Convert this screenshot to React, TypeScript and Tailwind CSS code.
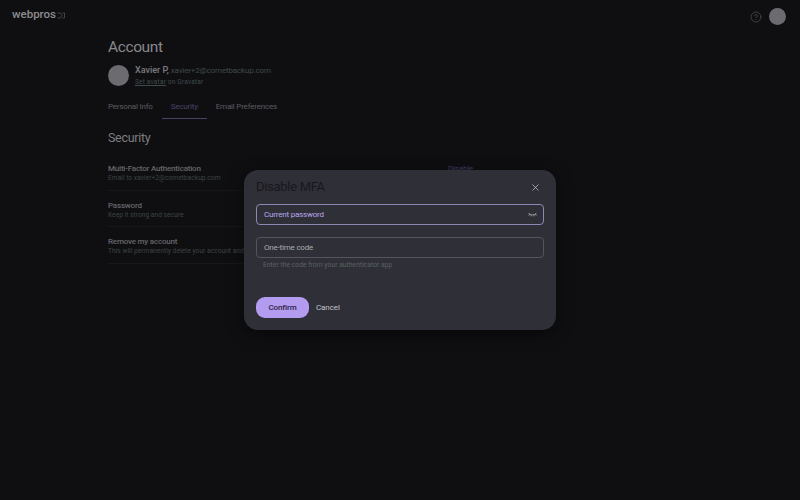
import React from 'react';
import { X, CircleHelp } from 'lucide-react';

const tabs = ['Personal Info', 'Security', 'Email Preferences'];

const rows = [
  { title: 'Multi-Factor Authentication', sub: 'Email to xavier+2@cometbackup.com', action: 'Disable' },
  { title: 'Password', sub: 'Keep it strong and secure', action: '' },
  { title: 'Remove my account', sub: 'This will permanently delete your account and', action: '' },
];

const App = () => {
  return (
    <div className="relative h-[500px] w-[800px] overflow-hidden bg-[#0f0f12] font-['Roboto',sans-serif]">
      {/* Top bar */}
      <header className="flex h-[33px] items-center justify-between pl-3 pr-[14px]">
        <div className="flex items-center pb-[3px]">
          <span className="text-[11.5px] font-medium leading-none text-[#8c8c8e]">webpros</span>
          <svg width="8" height="7" viewBox="0 0 8 7" className="ml-[0.5px] text-[#4a4a4e]" fill="none" stroke="currentColor" strokeWidth="0.9">
            <path d="M0.5 1h3l1.5 2.5-1.5 2.5h-3M7.5 1h-2M7.5 6h-2M7.5 1v5" />
          </svg>
        </div>
        <div className="flex items-center gap-[7px]">
          <CircleHelp size={12} strokeWidth={1.3} className="text-[#56565a]" />
          <div className="h-[17px] w-[17px] rounded-full bg-[#6b6b70]" />
        </div>
      </header>

      <main className="ml-[108px] w-[365px]">
        <h1 className="mt-[3px] text-[15.5px] leading-[22px] tracking-[-0.4px] text-[#88888b]">Account</h1>

        <div className="mt-[6px] flex items-center gap-[6px]">
          <div className="h-[21px] w-[21px] rounded-full bg-[#6b6b70]" />
          <div>
            <div className="flex items-baseline gap-[2px] leading-[13px]">
              <span className="text-[9px] font-medium text-[#7c7c80]">Xavier P,</span>
              <span className="text-[8px] tracking-[-0.15px] text-[#3f4a4a]">xavier+2@cometbackup.com</span>
            </div>
            <div className="mt-[1px] text-[6.5px] leading-[9px] tracking-[0.2px] text-[#3f4a4a]">
              <span className="underline">Set avatar</span> on Gravatar
            </div>
          </div>
        </div>

        <nav className="mt-[8px] flex text-[8px] tracking-[-0.2px]">
          {tabs.map((t) => (
            <div
              key={t}
              className={
                t === 'Security'
                  ? 'mx-[9px] border-b-[1.5px] border-[#4a4367] px-[9px] pb-[5px] pt-[6px] leading-[12px] text-[#4a4367]'
                  : 'pb-[5px] pt-[6px] leading-[12px] text-[#5c5c60]'
              }
            >
              {t}
            </div>
          ))}
        </nav>

        <h2 className="mt-[9px] text-[12.5px] leading-[20px] tracking-[-0.3px] text-[#7d7d80]">Security</h2>

        <div className="mt-[6px]">
          {rows.map((r) => (
            <div key={r.title} className="flex h-[36.6px] items-start justify-between border-b border-[#17171b] pt-[9px]">
              <div>
                <div className="text-[8px] font-medium leading-[11px] tracking-[-0.2px] text-[#66666a]">{r.title}</div>
                <div className="whitespace-nowrap text-[6.7px] leading-[9px] text-[#3c4343]">{r.sub}</div>
              </div>
              {r.action && <div className="text-[8px] leading-[11px] tracking-[-0.2px] text-[#453f68]">{r.action}</div>}
            </div>
          ))}
        </div>
      </main>

      {/* Dialog */}
      <div className="absolute left-[244px] top-[170px] flex h-[160px] w-[312px] flex-col rounded-[14px] bg-[#2f2f38] px-[12px] shadow-[0_4px_16px_rgba(0,0,0,0.5)]">
        <div className="flex h-[34px] items-center justify-between">
          <h3 className="mb-[2px] text-[13px] leading-none tracking-[-0.3px] text-[#17171c]">Disable MFA</h3>
          <X size={11} strokeWidth={1.5} className="mr-[3px] mt-[1px] text-[#d0d0d4]" />
        </div>

        <div className="flex h-[21px] items-center justify-between rounded-[4px] border border-[#8f86b5] pl-[7px] pr-[6px]">
          <span className="text-[8px] tracking-[-0.2px] text-[#b9a6ea]">Current password</span>
          <svg width="9" height="5" viewBox="0 0 9 5" fill="none" stroke="#b5b5ba" strokeWidth="0.8">
            <path d="M0.5 1C2 3.4 7 3.4 8.5 1M1.5 2.3L.8 3.6M3.2 3.1L3 4.4M5.8 3.1L6 4.4M7.5 2.3L8.2 3.6" />
          </svg>
        </div>

        <div className="mt-[12px] flex h-[21px] items-center rounded-[4px] border border-[#55555e] pl-[7px]">
          <span className="text-[8px] tracking-[-0.2px] text-[#a6adad]">One-time code</span>
        </div>
        <div className="mt-[1px] pl-[7px] text-[6.8px] leading-[12px] text-[#59625f]">
          Enter the code from your authenticator app
        </div>

        <div className="mt-[26px] flex items-center gap-[7px]">
          <button className="h-[21px] w-[53px] rounded-[9px] bg-[#b39cf0] text-[8px] font-medium tracking-[-0.1px] text-[#2c2440]">
            Confirm
          </button>
          <button className="text-[8px] tracking-[-0.1px] text-[#c3c3c8]">Cancel</button>
        </div>
      </div>
    </div>
  );
};

export default App;
